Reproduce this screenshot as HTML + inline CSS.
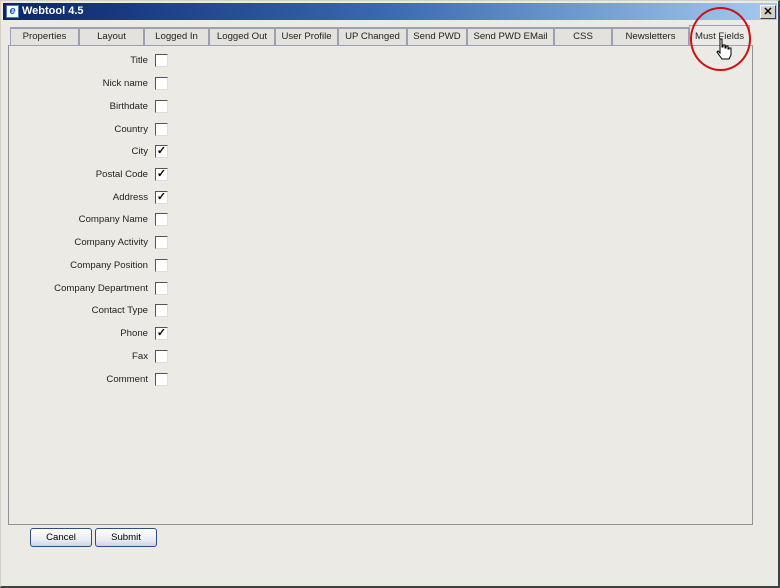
<!DOCTYPE html>
<html><head><meta charset="utf-8"><style>
*{margin:0;padding:0;box-sizing:border-box}
body{width:780px;height:588px;background:#ece9d8;font-family:"Liberation Sans",Arial,sans-serif;font-size:9.6px;color:#000;position:relative;overflow:hidden}
.win{position:absolute;left:0;top:0;width:780px;height:588px;background:#ebeae5;border:1px solid #d4d0c8;border-right:2px solid #404040;border-bottom:2px solid #404040}
.title{position:absolute;left:2px;top:2px;width:774px;height:17px;background:linear-gradient(90deg,#0a246a,#3b6ab0 50%,#a6caf0)}
.title span{position:absolute;left:19px;top:2px;color:#fff;font-weight:bold;font-size:11px}
.ico{position:absolute;left:3px;top:2px;width:13px;height:13px;background:#fff;border:1px solid #4a7ab8;color:#1a5fc0;font-weight:bold;font-size:11px;line-height:11px;text-align:center;font-style:italic}
.x{position:absolute;left:759px;top:4px;width:16px;height:14px;background:#d4d0c8;border:1px solid;border-color:#fff #404040 #404040 #fff;font-size:11px;font-weight:bold;line-height:12px;text-align:center}
.tab{position:absolute;top:26px;height:18px;background:#e3e2dc;border:2px solid #9e9eb4;border-bottom:none;border-left-width:1px;text-align:center;line-height:16px;color:#222}
.tab.a{top:24px;height:21px;background:#ebeae5;border:1px solid #9e9eb4;border-bottom:none;line-height:21px}
.panel{position:absolute;left:7px;top:44px;width:745px;height:480px;border:1px solid #919191;border-top:1px solid #9e9eb4}
.row{position:absolute;left:0;width:166px;height:13px;line-height:13px}
.row span{position:absolute;right:19px;top:0;white-space:nowrap;color:#222}
.cb{position:absolute;left:154px;top:0;width:13px;height:13px;background:#fff;border:1px solid;border-color:#555 #ddd #ddd #555;font-size:11px;line-height:11px;text-align:center;font-weight:bold}
.btn{position:absolute;top:527px;height:19px;border:1px solid #2a4f80;border-radius:3px;background:linear-gradient(#fff,#e6e9f0 70%,#c9d3e2);text-align:center;line-height:17px;color:#000}
.circle{position:absolute;left:689px;top:6px;width:61px;height:64px;border:2px solid #d01010;border-radius:50%}
</style></head><body>
<div class="win">
<div class="title"><div class="ico">e</div><span>Webtool 4.5</span></div>
<div class="x">✕</div>
<div class="tab" style="left:9px;width:70px">Properties</div>
<div class="tab" style="left:78px;width:66px">Layout</div>
<div class="tab" style="left:143px;width:66px">Logged In</div>
<div class="tab" style="left:208px;width:67px">Logged Out</div>
<div class="tab" style="left:274px;width:64px">User Profile</div>
<div class="tab" style="left:337px;width:70px">UP Changed</div>
<div class="tab" style="left:406px;width:61px">Send PWD</div>
<div class="tab" style="left:466px;width:88px">Send PWD EMail</div>
<div class="tab" style="left:553px;width:59px">CSS</div>
<div class="tab" style="left:611px;width:78px">Newsletters</div>
<div class="tab a" style="left:688px;width:61px">Must Fields</div>
<div class="panel"></div>
<div class="row" style="top:53px"><span>Title</span><div class="cb"></div></div>
<div class="row" style="top:76px"><span>Nick name</span><div class="cb"></div></div>
<div class="row" style="top:99px"><span>Birthdate</span><div class="cb"></div></div>
<div class="row" style="top:122px"><span>Country</span><div class="cb"></div></div>
<div class="row" style="top:144px"><span>City</span><div class="cb">✓</div></div>
<div class="row" style="top:167px"><span>Postal Code</span><div class="cb">✓</div></div>
<div class="row" style="top:190px"><span>Address</span><div class="cb">✓</div></div>
<div class="row" style="top:212px"><span>Company Name</span><div class="cb"></div></div>
<div class="row" style="top:235px"><span>Company Activity</span><div class="cb"></div></div>
<div class="row" style="top:258px"><span>Company Position</span><div class="cb"></div></div>
<div class="row" style="top:281px"><span>Company Department</span><div class="cb"></div></div>
<div class="row" style="top:303px"><span>Contact Type</span><div class="cb"></div></div>
<div class="row" style="top:326px"><span>Phone</span><div class="cb">✓</div></div>
<div class="row" style="top:349px"><span>Fax</span><div class="cb"></div></div>
<div class="row" style="top:372px"><span>Comment</span><div class="cb"></div></div>
<div class="btn" style="left:29px;width:62px">Cancel</div>
<div class="btn" style="left:94px;width:62px">Submit</div>
<div class="circle"></div>
<svg style="position:absolute;left:715px;top:37px" width="16" height="22" viewBox="0 0 16 22"><path d="M4 1h2v8h1V7h2v3h1V8h2v3h1V10h2v7l-2 4H6L1 14l1-1 2 2z" fill="#fff" stroke="#000" stroke-width="1"/></svg>
</div>
</body></html>
